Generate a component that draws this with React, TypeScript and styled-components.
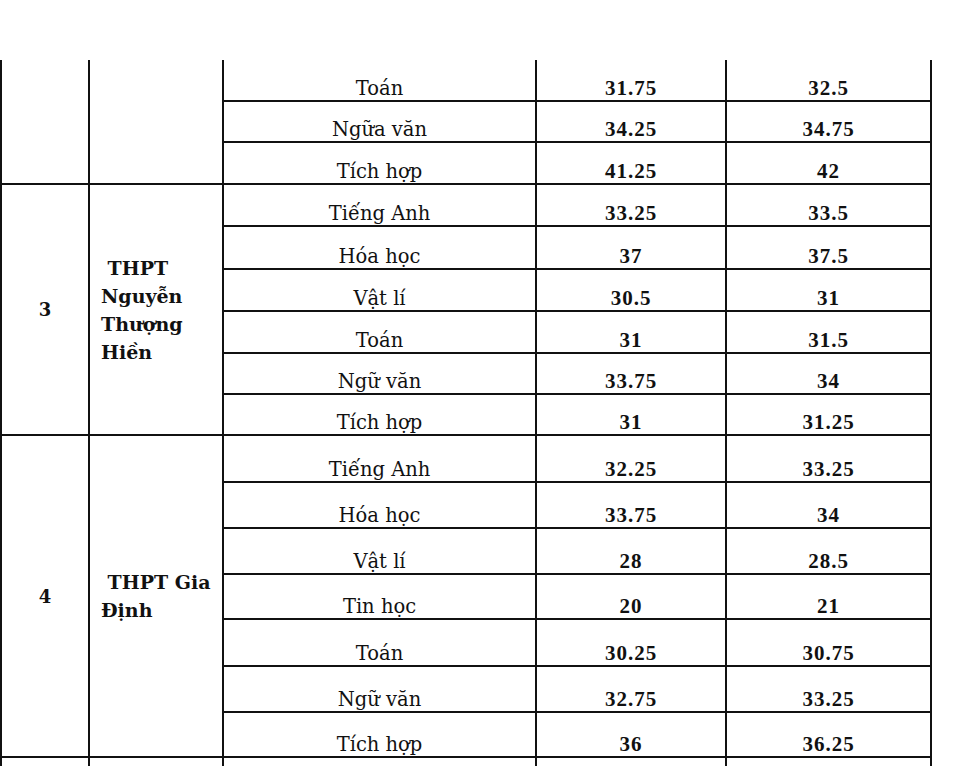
import React from 'react';
import styled, { createGlobalStyle } from 'styled-components';

const GlobalStyles = createGlobalStyle`
  html, body {
    margin: 0;
    padding: 0;
    background: #fff;
  }
  body {
    width: 960px;
    height: 766px;
    overflow: hidden;
  }
`;

type Score = { subject: string; a: string; b: string; h: number };
type School = { stt?: string; name?: string; rows: Score[] };

const schools: School[] = [
  {
    rows: [
      { subject: 'Toán', a: '31.75', b: '32.5', h: 42 },
      { subject: 'Ngữa văn', a: '34.25', b: '34.75', h: 41 },
      { subject: 'Tích hợp', a: '41.25', b: '42', h: 42 },
    ],
  },
  {
    stt: '3',
    name: '\u00a0THPT Nguyễn Thượng Hiền',
    rows: [
      { subject: 'Tiếng Anh', a: '33.25', b: '33.5', h: 42 },
      { subject: 'Hóa học', a: '37', b: '37.5', h: 43 },
      { subject: 'Vật lí', a: '30.5', b: '31', h: 42 },
      { subject: 'Toán', a: '31', b: '31.5', h: 42 },
      { subject: 'Ngữ văn', a: '33.75', b: '34', h: 41 },
      { subject: 'Tích hợp', a: '31', b: '31.25', h: 41 },
    ],
  },
  {
    stt: '4',
    name: '\u00a0THPT Gia Định',
    rows: [
      { subject: 'Tiếng Anh', a: '32.25', b: '33.25', h: 47 },
      { subject: 'Hóa học', a: '33.75', b: '34', h: 46 },
      { subject: 'Vật lí', a: '28', b: '28.5', h: 46 },
      { subject: 'Tin học', a: '20', b: '21', h: 45 },
      { subject: 'Toán', a: '30.25', b: '30.75', h: 47 },
      { subject: 'Ngữ văn', a: '32.75', b: '33.25', h: 46 },
      { subject: 'Tích hợp', a: '36', b: '36.25', h: 45 },
    ],
  },
  {
    rows: [{ subject: '', a: '', b: '', h: 46 }],
  },
];

const App = () => {
  return (
    <>
      <GlobalStyles />
      <Page>
        <Table>
          {schools.map((s, i) => (
            <SchoolRow key={i}>
              <SttCell>{s.stt}</SttCell>
              <NameCell>{s.name}</NameCell>
              <Rows>
                {s.rows.map((r, j) => (
                  <ScoreRow key={j} $h={r.h}>
                    <SubjectCell>{r.subject}</SubjectCell>
                    <ScoreCell>{r.a}</ScoreCell>
                    <ScoreCell>{r.b}</ScoreCell>
                  </ScoreRow>
                ))}
              </Rows>
            </SchoolRow>
          ))}
        </Table>
      </Page>
    </>
  );
};

export default App;

const line = '#111';

const Page = styled.div`
  padding-top: 60px;
`;

const Table = styled.div`
  width: 932px;
  display: flex;
  flex-direction: column;
  border-left: 2px solid ${line};
  box-sizing: border-box;
`;

const SchoolRow = styled.div`
  display: grid;
  grid-template-columns: 88px 134px 1fr;
`;

const Cell = styled.div`
  box-sizing: border-box;
  border-right: 2px solid ${line};
  border-bottom: 2px solid ${line};
  color: #111;
  display: flex;
`;

const SttCell = styled(Cell)`
  align-items: center;
  justify-content: center;
  font-family: 'DejaVu Serif', serif;
  font-weight: bold;
  font-size: 18px;
`;

const NameCell = styled(Cell)`
  align-items: center;
  padding: 0 4px 0 11px;
  font-family: 'DejaVu Serif', serif;
  font-weight: bold;
  font-size: 19px;
  line-height: 28px;
`;

const Rows = styled.div`
  display: flex;
  flex-direction: column;
`;

const ScoreRow = styled.div<{ $h: number }>`
  display: grid;
  grid-template-columns: 313px 190px 205px;
  height: ${(p) => p.$h}px;
`;

const SubjectCell = styled(Cell)`
  align-items: flex-end;
  justify-content: center;
  padding-bottom: 2px;
  font-family: 'DejaVu Serif', serif;
  font-size: 19.5px;
  line-height: 1;
`;

const ScoreCell = styled(Cell)`
  align-items: flex-end;
  justify-content: center;
  padding-bottom: 1px;
  font-family: 'Liberation Serif', 'Times New Roman', serif;
  font-weight: bold;
  font-size: 21px;
  letter-spacing: 1px;
  line-height: 1;
`;
